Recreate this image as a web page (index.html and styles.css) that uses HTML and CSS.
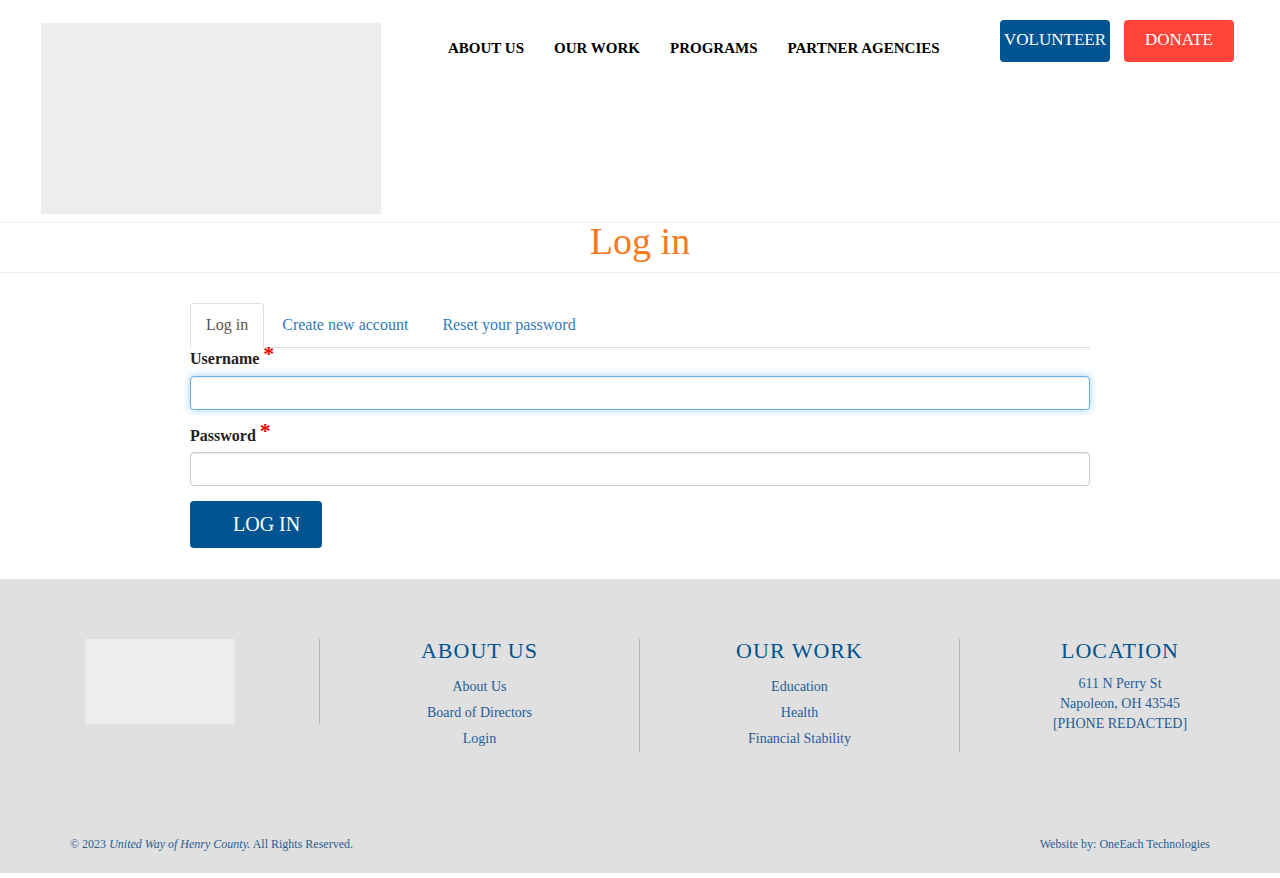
FILE: index.html
```html
<!DOCTYPE html>
<html lang="en">
<head>
<meta charset="utf-8">
<title>Log in | United Way of Henry County</title>
<link rel="stylesheet" href="styles.css">
</head>
<body>
<header class="site-header">
  <div class="logo"></div>
  <nav class="main-nav">
    <a href="#">ABOUT US</a>
    <a href="#">OUR WORK</a>
    <a href="#">PROGRAMS</a>
    <a href="#">PARTNER AGENCIES</a>
  </nav>
  <div class="cta">
    <a class="btn btn-volunteer" href="#">VOLUNTEER</a>
    <a class="btn btn-donate" href="#">DONATE</a>
  </div>
</header>

<div class="title-band">
  <h1>Log in</h1>
</div>

<main class="content">
  <ul class="tabs">
    <li class="active"><a href="#">Log in</a></li>
    <li><a href="#">Create new account</a></li>
    <li><a href="#">Reset your password</a></li>
  </ul>
  <form class="login-form">
    <div class="form-group">
      <label>Username <span class="req">*</span></label>
      <input type="text" class="form-control focused">
    </div>
    <div class="form-group">
      <label>Password <span class="req">*</span></label>
      <input type="password" class="form-control">
    </div>
    <button type="button" class="btn-submit">LOG IN</button>
  </form>
</main>

<footer class="site-footer">
  <div class="footer-cols">
    <div class="fcol fcol-logo"><div class="flogo"></div></div>
    <div class="fcol">
      <h2>ABOUT US</h2>
      <ul class="flinks">
        <li><a href="#">About Us</a></li>
        <li><a href="#">Board of Directors</a></li>
        <li><a href="#">Login</a></li>
      </ul>
    </div>
    <div class="fcol">
      <h2>OUR WORK</h2>
      <ul class="flinks">
        <li><a href="#">Education</a></li>
        <li><a href="#">Health</a></li>
        <li><a href="#">Financial Stability</a></li>
      </ul>
    </div>
    <div class="fcol fcol-last">
      <h2>LOCATION</h2>
      <p class="addr">611 N Perry St<br>Napoleon, OH 43545<br>[PHONE REDACTED]</p>
    </div>
  </div>
  <div class="footer-bottom">
    <div class="copy">© 2023 <em>United Way of Henry County.</em> All Rights Reserved.</div>
    <div class="credit">Website by: <a href="#">OneEach Technologies</a></div>
  </div>
</footer>
</body>
</html>
```

FILE: styles.css
```css
* { box-sizing: border-box; }
html, body { margin: 0; padding: 0; background: #fff; }
body {
  font-family: "Liberation Serif", "Times New Roman", serif;
  color: #222;
  font-size: 16px;
}
a { text-decoration: none; }

.site-header {
  display: flex;
  align-items: flex-start;
  height: 223px;
  padding: 23px 46px 0 41px;
  border-bottom: 1px solid #ececec;
}
.logo {
  width: 340px;
  height: 191px;
  background: #ededed;
  flex: none;
}
.main-nav {
  display: flex;
  margin-left: 52px;
  margin-top: 15px;
}
.main-nav a {
  color: #000;
  font-weight: bold;
  font-size: 15px;
  line-height: 20px;
  padding: 0 15px;
}
.cta {
  margin-left: auto;
  margin-top: -3px;
  display: flex;
  gap: 14px;
}
.btn {
  display: block;
  width: 110px;
  height: 42px;
  border-radius: 4px;
  color: #fff;
  font-size: 17px;
  line-height: 40px;
  text-align: center;
}
.btn-volunteer { background: #005492; }
.btn-donate { background: #ff453b; }

.title-band {
  border-bottom: 1px solid #ececec;
  text-align: center;
  padding-bottom: 13px;
}
.title-band h1 {
  margin: 0;
  font-weight: normal;
  font-size: 38px;
  line-height: 36px;
  color: #f47a20;
}

.content {
  width: 900px;
  margin: 30px auto 31px;
}
.tabs {
  list-style: none;
  margin: 0;
  padding: 0;
  display: flex;
  border-bottom: 1px solid #ddd;
}
.tabs li { margin-right: 2px; margin-bottom: -1px; }
.tabs a {
  display: block;
  padding: 10px 15px 11px;
  line-height: 22px;
  border: 1px solid transparent;
  border-radius: 4px 4px 0 0;
  color: #337ab7;
  font-size: 16px;
}
.tabs li.active a {
  color: #555;
  background: #fff;
  border-color: #ddd #ddd transparent;
}

.form-group { margin-bottom: 15px; }
.form-group label {
  display: block;
  font-weight: bold;
  font-size: 16px;
  line-height: 22px;
  margin-bottom: 6px;
  color: #222;
}
.req {
  color: #e00;
  font-size: 22px;
  line-height: 0;
  position: relative;
  top: -3px;
}
.form-control {
  display: block;
  width: 100%;
  height: 34px;
  border: 1px solid #ccc;
  border-radius: 4px;
  background: #fff;
  box-shadow: inset 0 1px 1px rgba(0,0,0,.075);
  font-family: inherit;
  font-size: 14px;
  padding: 6px 12px;
}
.form-control.focused {
  border-color: #66afe9;
  box-shadow: inset 0 1px 1px rgba(0,0,0,.075), 0 0 8px rgba(102,175,233,.6);
  outline: none;
}
.form-group + .form-group label { margin-bottom: 5px; }
.btn-submit {
  display: block;
  width: 132px;
  height: 47px;
  border: none;
  border-radius: 4px;
  background: #005492;
  color: #fff;
  font-family: inherit;
  font-size: 20px;
  line-height: 24px;
  white-space: nowrap;
  padding: 0 0 2px 43px;
  text-align: left;
}

.site-footer {
  background: #e0e0e0;
  padding: 60px 0 20px;
}
.footer-cols {
  display: flex;
  align-items: flex-start;
}
.fcol {
  width: 320px;
  text-align: center;
  border-right: 1px solid #b5b5b5;
}
.fcol-last { border-right: none; }
.fcol-logo { display: flex; justify-content: center; }
.flogo { width: 150px; height: 85px; background: #ededed; }
.fcol h2 {
  margin: 0 0 11px;
  font-weight: normal;
  font-size: 22px;
  line-height: 24px;
  letter-spacing: 1px;
  color: #00538f;
}
.flinks { list-style: none; margin: 0; padding: 0; }
.flinks li { line-height: 26px; font-size: 14px; }
.flinks a { color: #1f5c98; }
.addr {
  margin: 0;
  font-size: 14px;
  line-height: 20px;
  color: #1f5c98;
}
.footer-bottom {
  display: flex;
  justify-content: space-between;
  margin-top: 83px;
  padding: 0 70px;
  font-size: 12px;
  line-height: 18px;
  color: #2a5e92;
}
.credit a { color: #2a5e92; }
```
